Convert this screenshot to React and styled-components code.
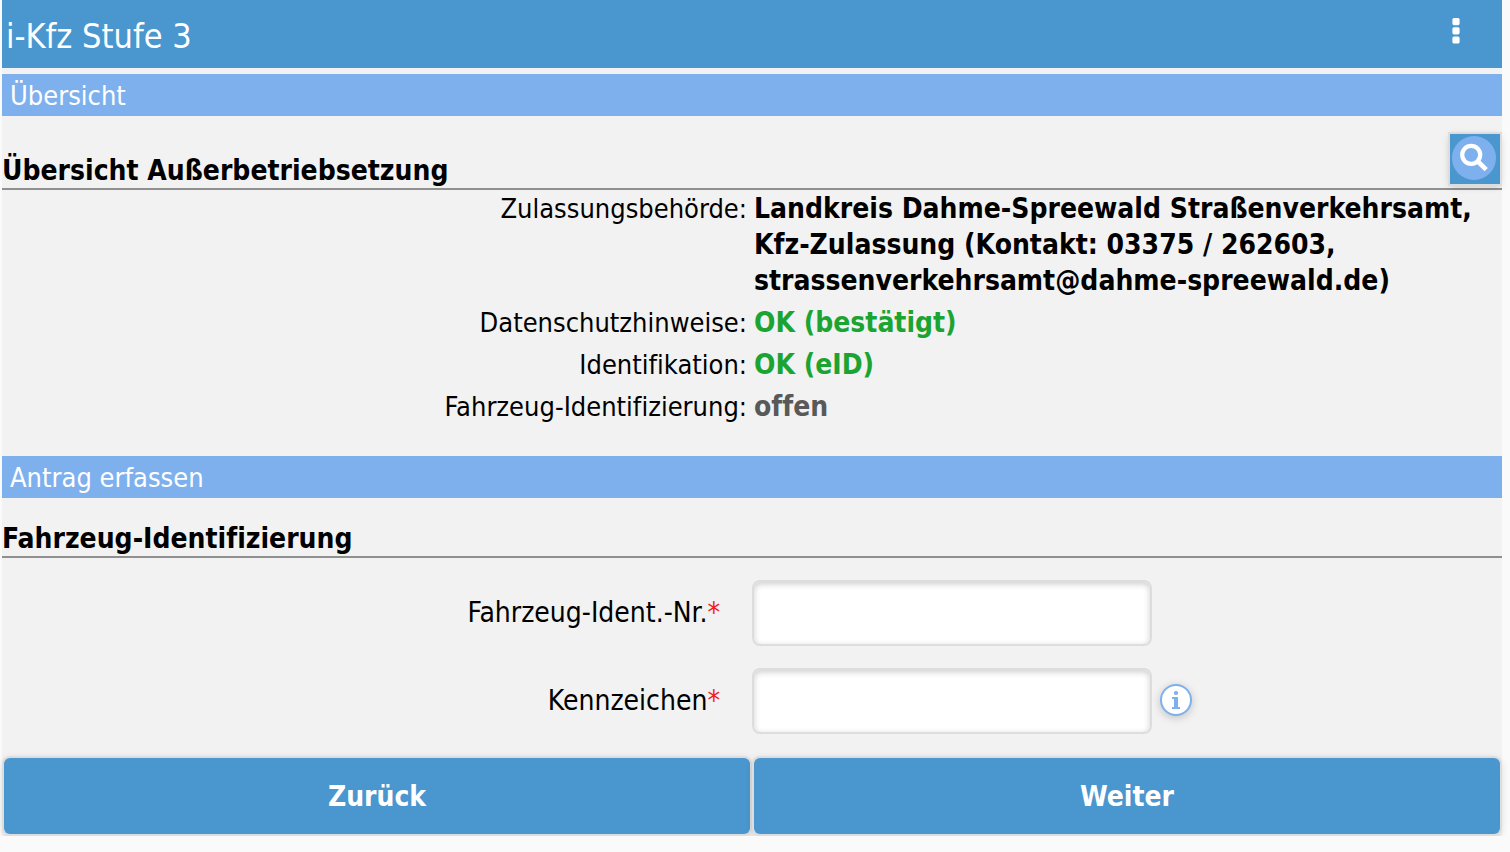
import React from "react";
import styled, { createGlobalStyle } from "styled-components";

const colors = {
  primary: "#4a96cf",
  secondary: "#7eb0ee",
  surface: "#f2f2f2",
  page: "#fafafa",
  border: "#dddddd",
  rule: "#909090",
  ok: "#1ba431",
  open: "#595959",
  required: "#f0201f",
};

const raised = `0 0 0 2px ${colors.border}, 0 2px 8px rgba(0, 0, 0, 0.2)`;

const GlobalStyle = createGlobalStyle`
  *, *::before, *::after { box-sizing: border-box; }
  body {
    margin: 0;
    background: ${colors.page};
    color: #000;
    font-family: Tahoma, "DejaVu Sans Condensed", "DejaVu Sans", sans-serif;
    font-stretch: condensed;
    font-variant-ligatures: none;
    font-size: 27px;
    line-height: 36px;
  }
  button, input { font: inherit; }
`;

const Page = styled.div`
  margin: 0 8px 0 2px;
  background: ${colors.surface};
`;

const Header = styled.header`
  display: flex;
  align-items: center;
  justify-content: space-between;
  height: 68px;
  padding: 4px 31px 0 4px;
  margin-bottom: 6px;
  background: ${colors.primary};
  color: #fff;
`;

const AppTitle = styled.h1`
  margin: 0;
  font-size: 34px;
  line-height: 44px;
  font-weight: 400;
`;

const MenuButton = styled.button`
  display: flex;
  justify-content: center;
  width: 30px;
  height: 44px;
  padding: 4px 0 0;
  border: 0;
  background: none;
  color: inherit;
  cursor: pointer;
`;

const SectionBar = styled.h2`
  margin: 0;
  padding: 4px 8px 2px;
  background: ${colors.secondary};
  color: #fff;
  font-size: 27px;
  font-weight: 400;
`;

const HeadingRow = styled.div`
  display: flex;
  align-items: flex-end;
  justify-content: space-between;
  height: ${(p) => (p.$tall ? 74 : 60)}px;
  border-bottom: 2px solid ${colors.rule};
`;

const Heading = styled.h3`
  margin: 0;
  font-size: 28px;
  line-height: 34px;
  font-weight: 700;
`;

const SearchButton = styled.button`
  display: flex;
  align-items: center;
  justify-content: center;
  width: 50px;
  height: 50px;
  margin: 0 2px 4px 0;
  padding: 0 2px 2px 0;
  border: 0;
  background: ${colors.primary};
  box-shadow: ${raised};
  cursor: pointer;
`;

const Summary = styled.dl`
  display: grid;
  grid-template-columns: 1fr 1fr;
  align-items: baseline;
  row-gap: 6px;
  margin: 0;
  padding: 1px 0 31px;
`;

const Term = styled.dt`
  padding-right: 5px;
  text-align: right;
`;

const statusColor = { ok: colors.ok, open: colors.open };

const Detail = styled.dd`
  margin: 0;
  padding: 0 2px;
  font-size: 28px;
  font-weight: 700;
  color: ${(p) => statusColor[p.$status] || "inherit"};
`;

const Fields = styled.div`
  display: grid;
  row-gap: 22px;
  padding: 22px 0;
`;

const Field = styled.div`
  display: grid;
  grid-template-columns: 1fr 1fr;
  align-items: center;
`;

const FieldLabel = styled.label`
  padding-right: 32px;
  font-size: 28px;
  text-align: right;
`;

const Required = styled.span`
  color: ${colors.required};
`;

const Control = styled.div`
  display: flex;
  align-items: center;
  gap: 8px;
`;

const TextInput = styled.input`
  width: 400px;
  height: 66px;
  padding: 0 12px;
  border: 2px solid ${colors.border};
  border-radius: 8px;
  background: #fff;
  box-shadow: inset 0 2px 6px rgba(0, 0, 0, 0.2);
`;

const InfoButton = styled.button`
  display: flex;
  align-items: center;
  justify-content: center;
  width: 32px;
  height: 32px;
  margin-bottom: 2px;
  padding: 0;
  border: 2px solid ${colors.secondary};
  border-radius: 50%;
  background: #fff;
  color: ${colors.secondary};
  box-shadow: 0 2px 8px rgba(0, 0, 0, 0.2);
  cursor: pointer;
`;

const Actions = styled.div`
  display: grid;
  grid-template-columns: 1fr 1fr;
  gap: 4px;
  padding: 2px;
`;

const ActionButton = styled.button`
  height: 76px;
  padding: 2px 6px 0;
  border: 0;
  border-radius: 6px;
  background: ${colors.primary};
  color: #fff;
  font-size: 28px;
  font-weight: 700;
  box-shadow: ${raised};
  cursor: pointer;
`;

const MenuIcon = () => (
  <svg width="8" height="26" viewBox="0 0 8 26" fill="currentColor" aria-hidden="true">
    <rect x="0.4" y="0" width="7.2" height="7.2" rx="1.6" />
    <rect x="0.4" y="9.2" width="7.2" height="7.2" rx="1.6" />
    <rect x="0.4" y="18.4" width="7.2" height="7.2" rx="1.6" />
  </svg>
);

const SearchIcon = () => (
  <svg width="44" height="44" viewBox="0 0 44 44" fill="none" aria-hidden="true">
    <circle cx="22" cy="22" r="22" fill={colors.secondary} />
    <circle cx="19.2" cy="18.8" r="9" stroke="#fff" strokeWidth="4.2" />
    <path d="M25.4 25 L34.2 33.6" stroke="#fff" strokeWidth="4.6" />
  </svg>
);

const InfoIcon = () => (
  <svg width="10" height="18" viewBox="0 0 10 18" fill="currentColor" aria-hidden="true">
    <ellipse cx="5" cy="2" rx="2.2" ry="1.9" />
    <path d="M1 6h6v10h2v2H1v-2h2V8H1z" />
  </svg>
);

const summary = [
  {
    term: "Zulassungsbehörde:",
    detail:
      "Landkreis Dahme-Spreewald Straßenverkehrsamt, Kfz-Zulassung (Kontakt: 03375 / 262603, strassenverkehrsamt@dahme-spreewald.de)",
  },
  { term: "Datenschutzhinweise:", detail: "OK (bestätigt)", status: "ok" },
  { term: "Identifikation:", detail: "OK (eID)", status: "ok" },
  { term: "Fahrzeug-Identifizierung:", detail: "offen", status: "open" },
];

export default function App() {
  return (
    <>
      <GlobalStyle />
      <Page>
        <Header>
          <AppTitle>i-Kfz Stufe 3</AppTitle>
          <MenuButton type="button" aria-label="Menü">
            <MenuIcon />
          </MenuButton>
        </Header>

        <SectionBar>Übersicht</SectionBar>
        <HeadingRow $tall>
          <Heading>Übersicht Außerbetriebsetzung</Heading>
          <SearchButton type="button" aria-label="Details anzeigen">
            <SearchIcon />
          </SearchButton>
        </HeadingRow>
        <Summary>
          {summary.map(({ term, detail, status }) => (
            <React.Fragment key={term}>
              <Term>{term}</Term>
              <Detail $status={status}>{detail}</Detail>
            </React.Fragment>
          ))}
        </Summary>

        <SectionBar>Antrag erfassen</SectionBar>
        <HeadingRow>
          <Heading>Fahrzeug-Identifizierung</Heading>
        </HeadingRow>
        <form onSubmit={(e) => e.preventDefault()}>
          <Fields>
            <Field>
              <FieldLabel htmlFor="fin">
                Fahrzeug-Ident.-Nr.<Required>*</Required>
              </FieldLabel>
              <Control>
                <TextInput id="fin" type="text" required />
              </Control>
            </Field>
            <Field>
              <FieldLabel htmlFor="kennzeichen">
                Kennzeichen<Required>*</Required>
              </FieldLabel>
              <Control>
                <TextInput id="kennzeichen" type="text" required />
                <InfoButton type="button" aria-label="Hinweis zum Kennzeichen">
                  <InfoIcon />
                </InfoButton>
              </Control>
            </Field>
          </Fields>
          <Actions>
            <ActionButton type="button">Zurück</ActionButton>
            <ActionButton type="submit">Weiter</ActionButton>
          </Actions>
        </form>
      </Page>
    </>
  );
}
